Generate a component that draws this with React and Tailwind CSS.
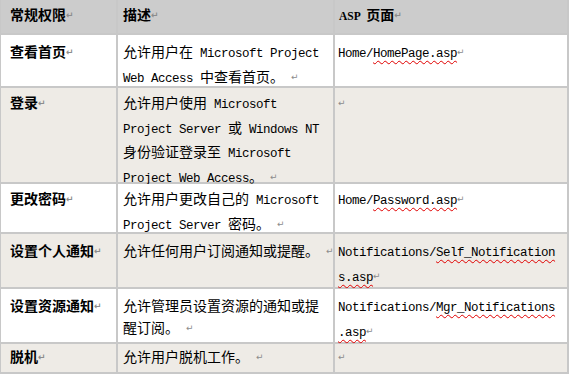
import React from "react";

function L({ children }) {
  return (
    <span className="font-['Liberation_Mono',monospace] text-[12.5px] tracking-[-0.5px]">{children}</span>
  );
}

function W({ children }) {
  return (
    <span className="underline decoration-wavy decoration-[#e00000] decoration-1 underline-offset-[3px]">
      {children}
    </span>
  );
}

function R() {
  return (
    <span className="font-['DejaVu_Sans',sans-serif] text-[9px] text-[#8c8c8c] align-[2px]">↵</span>
  );
}

const rows = [
  {
    bg: "bg-white",
    h: "h-[51px]",
    pt: "pt-[6px]",
    c1: "查看首页",
    c2: (
      <>
        允许用户在<L> Microsoft Project</L>
        <br />
        <L>Web Access </L>中查看首页。<L> </L>
        <R />
      </>
    ),
    c3: (
      <>
        <L>
          Home/<W>HomePage.asp</W>
        </L>
        <R />
      </>
    ),
  },
  {
    bg: "bg-[#eeebe6]",
    h: "h-[94px]",
    pt: "pt-[4px]",
    c1: "登录",
    c2: (
      <>
        允许用户使用<L> Microsoft</L>
        <br />
        <L>Project Server </L>或<L> Windows NT</L>
        <br />
        身份验证登录至<L> Microsoft</L>
        <br />
        <L>Project Web Access</L>。<L> </L>
        <R />
      </>
    ),
    c3: <R />,
  },
  {
    bg: "bg-white",
    h: "h-[48px]",
    pt: "pt-[4px]",
    c1: "更改密码",
    c2: (
      <>
        允许用户更改自己的<L> Microsoft</L>
        <br />
        <L>Project Server </L>密码。<L> </L>
        <R />
      </>
    ),
    c3: (
      <>
        <L>
          Home/<W>Password.asp</W>
        </L>
        <R />
      </>
    ),
  },
  {
    bg: "bg-[#eeebe6]",
    h: "h-[53px]",
    pt: "pt-[6px]",
    c1: "设置个人通知",
    c2: (
      <>
        允许任何用户订阅通知或提醒。<L> </L>
        <R />
      </>
    ),
    c3: (
      <>
        <L>
          Notifications/<W>Self_Notification</W>
        </L>
        <br />
        <L>
          <W>s.asp</W>
        </L>
        <R />
      </>
    ),
  },
  {
    bg: "bg-white",
    h: "h-[53px]",
    pt: "pt-[6px]",
    c1: "设置资源通知",
    c2: (
      <>
        允许管理员设置资源的通知或提
        <br />
        醒订阅。<L> </L>
        <R />
      </>
    ),
    c3: (
      <>
        <L>
          Notifications/<W>Mgr_Notifications</W>
        </L>
        <br />
        <L>
          <W>.asp</W>
        </L>
        <R />
      </>
    ),
  },
  {
    bg: "bg-[#eeebe6]",
    h: "h-[28px]",
    pt: "pt-[2px]",
    c1: "脱机",
    c2: (
      <>
        允许用户脱机工作。<L> </L>
        <R />
      </>
    ),
    c3: <R />,
  },
];

export default function App() {
  return (
    <div className="w-[570px] h-[377px] bg-white font-['Noto_Sans_CJK_SC',sans-serif] text-[14px] leading-[21.5px] text-black">
      <div className="w-[569px] bg-[#c8c8c8] pl-[1px] pr-[2px] pb-[2px] grid grid-cols-[115px_215px_232px] gap-x-[2px] gap-y-[2px]">
        <div className="h-[33px] bg-[#cccccc] pl-[9px] pt-[4px] font-bold whitespace-pre">
          常规权限<R />
        </div>
        <div className="h-[33px] bg-[#cccccc] pl-[5px] pt-[4px] font-bold whitespace-pre">
          描述<R />
        </div>
        <div className="h-[33px] bg-[#cccccc] pl-[4px] pt-[4px] font-bold whitespace-pre">
          <span className="font-['Liberation_Serif',serif] text-[11.5px]">ASP </span> 页面<R />
        </div>
        {rows.map((r, i) => (
          <React.Fragment key={i}>
            <div className={`${r.bg} ${r.h} ${r.pt} pl-[9px] font-bold whitespace-pre`}>
              {r.c1}
              <R />
            </div>
            <div className={`${r.bg} ${r.h} ${r.pt} pl-[5px] whitespace-pre`}>{r.c2}</div>
            <div className={`${r.bg} ${r.h} ${r.pt} pl-[3px] whitespace-pre`}>{r.c3}</div>
          </React.Fragment>
        ))}
      </div>
    </div>
  );
}
